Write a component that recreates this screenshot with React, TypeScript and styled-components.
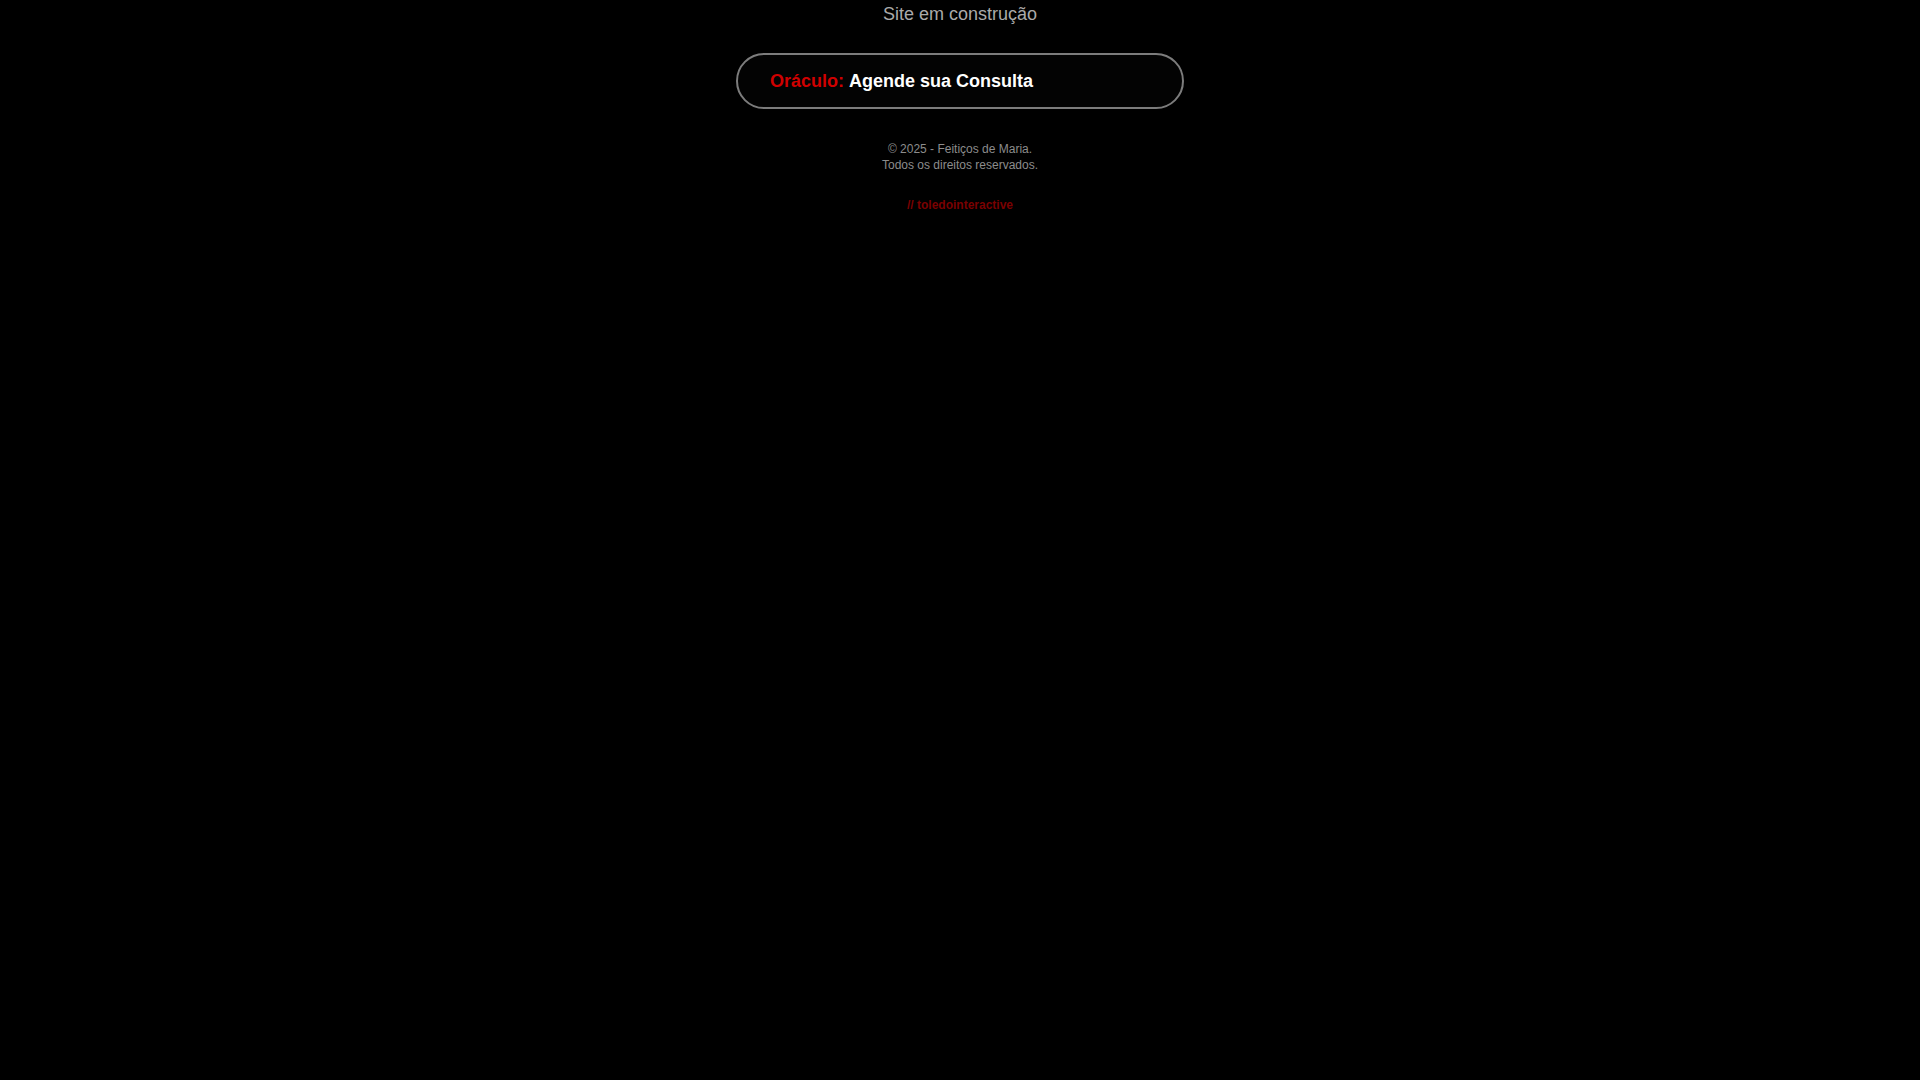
import React from 'react'
import styled, { createGlobalStyle } from 'styled-components'

const GlobalStyle = createGlobalStyle`
  html, body {
    margin: 0;
    padding: 0;
    background: #000000;
    font-family: 'Liberation Sans', Arial, sans-serif;
  }
`

const Page = styled.div`
  display: flex;
  flex-direction: column;
  align-items: center;
  min-height: 100vh;
  background: #000000;
`

const Title = styled.h1`
  margin: 0;
  font-size: 18px;
  font-weight: 400;
  line-height: 28px;
  color: #aaaaaa;
`

const LinkPill = styled.a`
  display: flex;
  align-items: center;
  box-sizing: border-box;
  width: 448px;
  height: 56px;
  margin-top: 25px;
  padding: 0 32px;
  border: 2px solid #7c7c7c;
  border-radius: 28px;
  background: #030303;
  font-size: 18px;
  font-weight: 700;
  color: #ffffff;
  text-decoration: none;
`

const Accent = styled.span`
  color: #d00000;
  margin-right: 5px;
`

const Footer = styled.footer`
  display: flex;
  flex-direction: column;
  align-items: center;
  margin-top: 32px;
  font-size: 12px;
  line-height: 16px;
  color: #8c8c8c;
`

const Credit = styled.a`
  margin-top: 24px;
  font-size: 12px;
  font-weight: 700;
  line-height: 16px;
  color: #7a0000;
  text-decoration: none;
`

export default function App() {
  return (
    <Page>
      <GlobalStyle />
      <Title>Site em construção</Title>
      <LinkPill href="#">
        <Accent>Oráculo:</Accent>Agende sua Consulta
      </LinkPill>
      <Footer>
        <span>© 2025 - Feitiços de Maria.</span>
        <span>Todos os direitos reservados.</span>
      </Footer>
      <Credit href="#">// toledointeractive</Credit>
    </Page>
  )
}
